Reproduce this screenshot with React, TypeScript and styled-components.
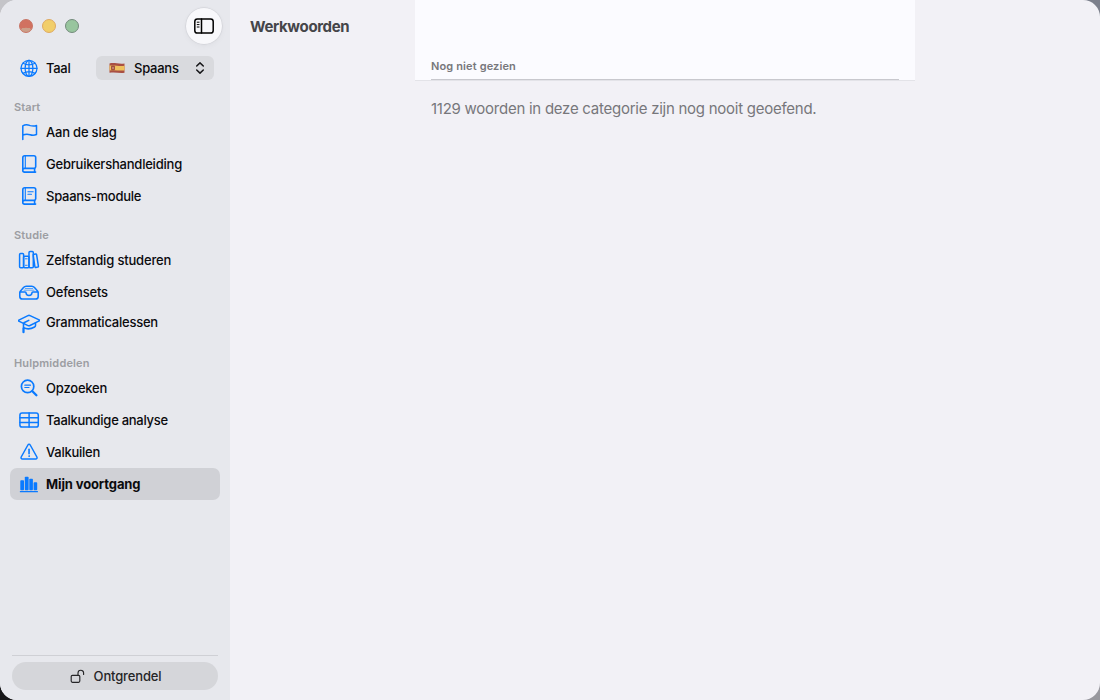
import React from "react";
import styled, { createGlobalStyle } from "styled-components";

const GlobalStyle = createGlobalStyle`
  * { box-sizing: border-box; }
  body { margin: 0; overflow: hidden; font-family: Inter, "Liberation Sans", sans-serif; color: #0b0b0d; }
`;

const Desktop = styled.div`
  width: 1100px;
  height: 700px;
  background:
    linear-gradient(#c4c4c8, #c4c4c8) 0 0 / 50% 50% no-repeat,
    linear-gradient(#7c808c, #7c808c) 100% 0 / 50% 50% no-repeat,
    linear-gradient(#161618, #161618) 0 100% / 50% 50% no-repeat,
    linear-gradient(#98989e, #98989e) 100% 100% / 50% 50% no-repeat;
`;

const Window = styled.div`
  display: flex;
  width: 100%;
  height: 100%;
  border-radius: 17px;
  overflow: hidden;
  background: #f2f1f6;
`;

const Sidebar = styled.aside`
  display: flex;
  flex-direction: column;
  width: 230px;
  background: #e7e8ed;
`;

const TitleBar = styled.header`
  display: flex;
  align-items: center;
  height: 52px;
  padding: 0 8px 0 19px;
  gap: 9px;
`;

const Light = styled.i<{ $fill: string; $edge: string }>`
  width: 14px;
  height: 14px;
  border-radius: 50%;
  background: ${(p) => p.$fill};
  border: 1px solid ${(p) => p.$edge};
`;

const ToggleButton = styled.button`
  display: grid;
  place-items: center;
  width: 36px;
  height: 36px;
  margin-left: auto;
  padding: 0;
  border: 0;
  border-radius: 50%;
  background: #f8f8fb;
  box-shadow: 0 0 1px 0.5px #c9cad0, 0 2px 6px rgba(0, 0, 0, 0.04);
`;

const LanguageRow = styled.div`
  display: flex;
  align-items: center;
  height: 32px;
  padding: 0 16px 0 18px;
`;

const IconSlot = styled.span`
  display: grid;
  place-items: center;
  width: 22px;
  height: 22px;
  margin-right: 6px;
  color: #0a7aff;
`;

const Label = styled.span<{ $bold?: boolean; $track?: number; $raised?: boolean }>`
  padding-bottom: ${(p) => (p.$raised ? 2 : 0)}px;
  font-size: 13px;
  line-height: 16px;
  white-space: nowrap;
  font-weight: ${(p) => (p.$bold ? 700 : 450)};
  letter-spacing: ${(p) => p.$track ?? -0.2}px;
`;

const Picker = styled.div`
  display: flex;
  align-items: center;
  width: 118px;
  height: 24px;
  margin-left: auto;
  padding: 0 9px 0 13px;
  border-radius: 6px;
  background: #d9dade;
`;

const PickerLabel = styled(Label)`
  margin: 0 auto 0 9px;
`;

const Section = styled.section`
  padding: 0 10px;
`;

const SectionTitle = styled.h2<{ $track: number }>`
  height: 32px;
  margin: 0;
  padding: 15px 4px 0;
  font-size: 11px;
  line-height: 16px;
  font-weight: 600;
  color: #9c9da2;
  letter-spacing: ${(p) => p.$track}px;
`;

const Item = styled.div<{ $selected?: boolean; $raised?: boolean }>`
  display: flex;
  align-items: center;
  height: 32px;
  padding: 0 8px ${(p) => (p.$raised ? 2 : 0)}px;
  border-radius: 7px;
  background: ${(p) => (p.$selected ? "#d0d1d6" : "transparent")};
`;

const Footer = styled.footer`
  margin: auto 12px 0;
  padding: 6px 0 10px;
  border-top: 1px solid #cfd0d5;
`;

const UnlockButton = styled.button`
  display: flex;
  align-items: center;
  justify-content: center;
  gap: 9px;
  width: 100%;
  height: 28px;
  padding: 0 0 0 1px;
  border: 0;
  border-radius: 14px;
  background: #d5d6da;
  color: #252527;
  font-family: inherit;
`;

const Main = styled.main`
  display: grid;
  grid-template-columns: 165px 500px 185px;
  padding-left: 20px;
`;

const Title = styled.h1`
  margin: 0;
  padding-top: 17px;
  font-size: 15px;
  line-height: 20px;
  font-weight: 650;
  color: #454549;
  letter-spacing: -0.36px;
`;

const StickyHeader = styled.div`
  display: flex;
  flex-direction: column;
  justify-content: flex-end;
  height: 81px;
  padding: 0 16px;
  background: #fbfbff;
  border-bottom: 1px solid #e3e3e8;
`;

const GroupTitle = styled.h3`
  margin: 0;
  height: 22px;
  border-bottom: 1px solid #c8c8ce;
  font-size: 11px;
  line-height: 16px;
  font-weight: 600;
  color: #77777b;
  letter-spacing: 0.13px;
`;

const Message = styled.p`
  margin: 0;
  padding: 18px 16px;
  font-size: 15px;
  line-height: 20px;
  color: #77777b;
  white-space: nowrap;
  letter-spacing: -0.255px;
`;

type GlyphProps = { children: React.ReactNode; size?: number; weight?: number };

const Glyph = ({ children, size = 22, weight = 1.5 }: GlyphProps) => (
  <svg width={size} height={size} viewBox={`0 0 ${size} ${size}`} fill="none" stroke="currentColor"
    strokeWidth={weight} strokeLinecap="round" strokeLinejoin="round">{children}</svg>
);

const icons = {
  globe: <Glyph weight={1.25}><circle cx="11" cy="11.3" r="8" /><ellipse cx="11" cy="11.3" rx="3.9" ry="8" /><path d="M11 3.3v16M3 11.3h16M5 6.2c3.6 2 8.4 2 12 0M5 16.4c3.6-2 8.4-2 12 0" /></Glyph>,
  flag: <Glyph weight={1.5}><path d="M4.8 18.6V4.8c3.4-2 5.4-.9 7.6-.2 2.4.7 4.2.6 6.1-.1v9c-2.2.9-4.2.9-6.4.2-2.3-.7-4.4-1-7.3.5" /></Glyph>,
  book: <Glyph weight={1.6}><path d="M4.8 17V4.7c0-1.2.8-2 2-2h9.1c1.1 0 1.8.7 1.8 1.8v9.3c0 1-.6 1.6-1.6 1.6H6.6a1.8 1.8 0 0 0 0 3.7h11M16.6 15.5v3.6" /><path d="M7.3 3v12.2" strokeWidth="1.1" /></Glyph>,
  bookText: <Glyph weight={1.6}><path d="M4.8 17V4.7c0-1.2.8-2 2-2h9.1c1.1 0 1.8.7 1.8 1.8v9.3c0 1-.6 1.6-1.6 1.6H6.6a1.8 1.8 0 0 0 0 3.7h11M16.6 15.5v3.6" /><path d="M7.3 3v12.2M9.9 6.7h5.3M9.9 9.2h3.6" strokeWidth="1.1" /></Glyph>,
  books: <Glyph weight={1.5}><rect x="1.6" y="4.4" width="4" height="14.4" rx="1" /><rect x="5.6" y="7.2" width="5.4" height="11.6" rx="1" /><rect x="11" y="2.6" width="4.3" height="16.2" rx="1" /><path d="m15.3 5.5 2.3-.5c.6-.1.9.2 1 .7l1.8 11.4c.1.6-.2.9-.7 1l-1.8.3c-.5.1-.9-.1-1-.7L15.3 7z" /><path d="M7.4 9.8h1.8M7.4 16.3h1.8" strokeWidth=".9" /></Glyph>,
  tray: <Glyph weight={1.55}><path d="M1.8 11.6v3.8c0 1.7.9 2.6 2.6 2.6h13.2c1.7 0 2.6-.9 2.6-2.6v-3.8c0-.7-.2-1.1-.7-1.7l-3-3.4c-.8-.9-1.5-1.3-2.7-1.3H8.2c-1.2 0-1.9.4-2.7 1.3l-3 3.4c-.5.6-.7 1-.7 1.7ZM2 11h5.1c.7 0 1 .5 1 1.1 0 1.3 1.2 2.3 2.9 2.3s2.9-1 2.9-2.3c0-.6.3-1.1 1-1.1H20" /><path d="M7.3 7.5h7.4M6 9.2h10" strokeWidth=".9" opacity=".7" /></Glyph>,
  cap: <Glyph weight={1.55}><path d="M.8 8.1 10 3.6c.7-.3 1.3-.3 2 0l9.2 4.3c.5.3.5.7 0 1L12 13.5c-.7.4-1.3.4-2 .1L.8 9.1c-.5-.3-.5-.7 0-1Z" /><path d="m10.8 8.4-4.4 2.1c-.6.4-.9.8-.9 1.6v8.2" /><path d="M5.6 15.8c4 1.9 7 1.5 11-.8.7-.4.9-.8.9-1.6v-2.4" /><path d="M5.5 16.5v3.8" strokeWidth="2" /></Glyph>,
  lookup: <Glyph weight={1.7}><circle cx="9.6" cy="9.4" r="6.2" /><path d="m14.4 14.2 4 4" strokeWidth="2.3" /><path d="M6.8 8.2h5.7M6.8 10.5h4.2" strokeWidth="1.2" /></Glyph>,
  table: <Glyph weight={1.5}><rect x="1.9" y="4.1" width="18.4" height="14" rx="2.2" /><path d="M2 8.8h18M2 13.4h18M11.1 4v14" /></Glyph>,
  warning: <Glyph weight={1.5}><path d="M9.9 4c.5-.9 1.8-.9 2.3 0l6.7 12c.5.9-.1 1.9-1.2 1.9H4.4c-1.1 0-1.7-1-1.2-1.9z" /><path d="M11.05 8.2v4.5" strokeWidth="1.6" /><circle cx="11.05" cy="15.1" r=".45" fill="currentColor" strokeWidth=".8" /></Glyph>,
  bars: <Glyph><g fill="currentColor" stroke="none"><rect x="2.3" y="7.3" width="3.7" height="9.9" rx=".8" /><rect x="6.8" y="3.8" width="3.8" height="13.4" rx=".8" /><rect x="11.3" y="5.7" width="3.6" height="11.5" rx=".8" /><rect x="15.6" y="9.2" width="3.6" height="8" rx=".8" /><rect x="1.8" y="17.9" width="18.2" height="1.3" rx=".5" /></g></Glyph>,
};

type Entry = { icon: keyof typeof icons; text: string; track?: number; selected?: boolean; raised?: boolean };
type Group = { title: string; track: number; entries: Entry[] };

const groups: Group[] = [
  { title: "Start", track: 0.1, entries: [
    { icon: "flag", text: "Aan de slag" },
    { icon: "book", text: "Gebruikershandleiding", track: -0.22 },
    { icon: "bookText", text: "Spaans-module", track: -0.24 },
  ] },
  { title: "Studie", track: 0.15, entries: [
    { icon: "books", text: "Zelfstandig studeren", track: -0.17 },
    { icon: "tray", text: "Oefensets" },
    { icon: "cap", text: "Grammaticalessen", track: -0.23, raised: true },
  ] },
  { title: "Hulpmiddelen", track: 0.15, entries: [
    { icon: "lookup", text: "Opzoeken" },
    { icon: "table", text: "Taalkundige analyse", track: -0.27 },
    { icon: "warning", text: "Valkuilen", track: -0.25 },
    { icon: "bars", text: "Mijn voortgang", track: -0.12, selected: true },
  ] },
];

const SpanishFlag = () => (
  <svg width="16" height="12" viewBox="0 0 16 12">
    <path d="M.5 1.4c5-1 9 1 15 .2v9.1c-5 .8-9-.9-15 .1z" fill="#a94f42" />
    <path d="M.5 3.6c5-.8 9 .9 15 .2v4.6c-5 .6-9-.8-15 0z" fill="#efc15c" />
    <rect x="2" y="3.6" width="4" height="4.6" rx="1" fill="#a5533c" />
    <path d="M3.5 5h1v2h-1z" fill="#d9b09a" />
  </svg>
);

export default function App() {
  return (
    <Desktop>
      <GlobalStyle />
      <Window>
        <Sidebar>
          <TitleBar>
            <Light $fill="radial-gradient(ellipse 50% 24% at 50% 86%, #cc9f89 0 90%, #d17160 100%)" $edge="#c87362" />
            <Light $fill="#f1ce6a" $edge="#dfaa62" />
            <Light $fill="#98c59e" $edge="#748b7c" />
            <ToggleButton>
              <Glyph size={20} weight={1.5}>
                <rect x=".8" y="3" width="18.4" height="14" rx="2.6" />
                <path d="M7.5 3v14" />
                <path d="M3.2 6.2h1.9M3.2 8.6h1.9M3.2 11h1.9" strokeWidth="1" />
              </Glyph>
            </ToggleButton>
          </TitleBar>
          <LanguageRow>
            <IconSlot>{icons.globe}</IconSlot>
            <Label $track={-0.3}>Taal</Label>
            <Picker>
              <SpanishFlag />
              <PickerLabel $track={-0.25}>Spaans</PickerLabel>
              <svg width="10" height="14" viewBox="0 0 10 14" fill="none" stroke="#171719" strokeWidth="1.5" strokeLinecap="round" strokeLinejoin="round">
                <path d="M1.7 5 5 1.9 8.3 5M1.7 9 5 12.1 8.3 9" />
              </svg>
            </Picker>
          </LanguageRow>
          {groups.map((group) => (
            <Section key={group.title}>
              <SectionTitle $track={group.track}>{group.title}</SectionTitle>
              {group.entries.map((entry) => (
                <Item key={entry.text} $selected={entry.selected} $raised={entry.raised}>
                  <IconSlot>{icons[entry.icon]}</IconSlot>
                  <Label $bold={entry.selected} $track={entry.track} $raised={entry.raised}>{entry.text}</Label>
                </Item>
              ))}
            </Section>
          ))}
          <Footer>
            <UnlockButton>
              <Glyph size={15} weight={1.15}>
                <rect x="1.2" y="6.3" width="8.6" height="7" rx="1.2" />
                <path d="M8 6.2V4a2.8 2.8 0 0 1 5.6 0v1.4" />
              </Glyph>
              <Label $track={-0.15}>Ontgrendel</Label>
            </UnlockButton>
          </Footer>
        </Sidebar>
        <Main>
          <Title>Werkwoorden</Title>
          <section>
            <StickyHeader><GroupTitle>Nog niet gezien</GroupTitle></StickyHeader>
            <Message>1129 woorden in deze categorie zijn nog nooit geoefend.</Message>
          </section>
        </Main>
      </Window>
    </Desktop>
  );
}
